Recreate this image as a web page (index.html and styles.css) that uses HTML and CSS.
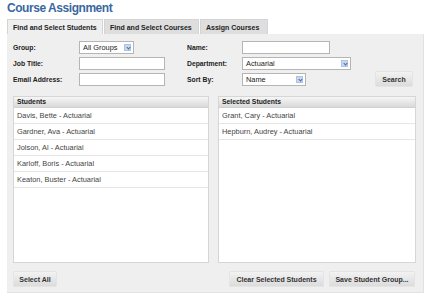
FILE: index.html
```html
<!DOCTYPE html>
<html lang="en">
<head>
  <meta charset="UTF-8">
  <title>Course Assignment</title>
  <link rel="stylesheet" href="styles.css">
</head>
<body>
  <div class="page">
    <h1 class="title">Course Assignment</h1>

    <!-- Tabs -->
    <div class="tabs">
      <div class="tab active">Find and Select Students</div>
      <div class="tab">Find and Select Courses</div>
      <div class="tab">Assign Courses</div>
    </div>

    <div class="panel">
      <!-- Search form -->
      <div class="search-form">
        <label class="lbl">Group:</label>
        <div class="field"><span class="select sel-group">All Groups<i class="arrow"></i></span></div>
        <label class="lbl">Name:</label>
        <div class="field"><span class="input in-name"></span></div>
        <div></div>

        <label class="lbl">Job Title:</label>
        <div class="field"><span class="input in-wide"></span></div>
        <label class="lbl">Department:</label>
        <div class="field"><span class="select sel-dept">Actuarial<i class="arrow"></i></span></div>
        <div></div>

        <label class="lbl">Email Address:</label>
        <div class="field"><span class="input in-wide"></span></div>
        <label class="lbl">Sort By:</label>
        <div class="field"><span class="select sel-sort">Name<i class="arrow"></i></span></div>
        <div class="field right"><button class="btn btn-search">Search</button></div>
      </div>

      <!-- Lists -->
      <div class="lists">
        <div class="listbox">
          <div class="list-head">Students</div>
          <div class="list-row">Davis, Bette - Actuarial</div>
          <div class="list-row">Gardner, Ava - Actuarial</div>
          <div class="list-row">Jolson, Al - Actuarial</div>
          <div class="list-row">Karloff, Boris - Actuarial</div>
          <div class="list-row">Keaton, Buster - Actuarial</div>
        </div>
        <div class="listbox">
          <div class="list-head">Selected Students</div>
          <div class="list-row">Grant, Cary - Actuarial</div>
          <div class="list-row">Hepburn, Audrey - Actuarial</div>
        </div>
      </div>

      <!-- Buttons -->
      <div class="actions">
        <button class="btn btn-all">Select All</button>
        <div class="actions-right">
          <button class="btn btn-clear">Clear Selected Students</button>
          <button class="btn btn-save">Save Student Group...</button>
        </div>
      </div>
    </div>
  </div>
</body>
</html>
```

FILE: styles.css
```css
/* Base */
body {
  margin: 0;
  background: #fff;
  font-family: "Liberation Sans", Arial, sans-serif;
  color: #222;
}
.page { padding: 0 6px 0 7px; }

.title {
  margin: 0;
  height: 19px;
  line-height: 17px;
  font-size: 12px;
  letter-spacing: -0.45px;
  font-weight: bold;
  color: #3a67a2;
}

/* Tabs */
.tabs { display: flex; gap: 1px; height: 15px; }
.tab {
  padding: 0 0 0 5px;
  line-height: 15px;
  font-size: 7px;
  font-weight: bold;
  white-space: nowrap;
  overflow: hidden;
  background: #dedede;
  border: 1px solid #d4d4d4;
  border-bottom: none;
  box-sizing: border-box;
}
.tab.active { background: #efefef; width: 96px; }
.tab:nth-child(2) { width: 95px; }
.tab:nth-child(3) { width: 68px; }

/* Panel */
.panel {
  background: #efefef;
  border-right: 1px solid #e2e2e2;
  border-bottom: 1px solid #e2e2e2;
  padding: 7px 7px 6px 6px;
  height: 259px;
  box-sizing: border-box;
}

/* Search form */
.search-form {
  display: grid;
  grid-template-columns: 66px 108px 55px 1fr auto;
  grid-auto-rows: 13px;
  row-gap: 3px;
  align-items: center;
}
.lbl { font-size: 6.8px; font-weight: bold; color: #222; white-space: nowrap; }
.field { height: 13px; }
.field.right { display: flex; align-items: flex-start; padding-right: 3px; }

.input, .select {
  display: block;
  height: 13px;
  box-sizing: border-box;
  background: #fff;
  border: 1px solid #b5b5b5;
}
.in-name { width: 88px; }
.in-wide { width: 86px; }

.select {
  position: relative;
  padding-left: 3px;
  font-size: 7.4px;
  line-height: 11px;
  color: #222;
}
.sel-group { width: 55px; }
.sel-dept { width: 109px; }
.sel-sort { width: 64px; }
.arrow {
  position: absolute;
  right: 2px;
  top: 2px;
  width: 7px;
  height: 7px;
  background: #c9d8ee;
  border: 1px solid #aec3e2;
  box-sizing: border-box;
}
.arrow::after {
  content: "";
  position: absolute;
  left: 1.5px;
  top: 0.5px;
  width: 2px;
  height: 2px;
  border-right: 1px solid #3f68a8;
  border-bottom: 1px solid #3f68a8;
  transform: rotate(45deg);
}

/* Buttons */
.btn {
  height: 16px;
  padding: 0;
  font-family: inherit;
  font-size: 7px;
  font-weight: bold;
  color: #333;
  background: linear-gradient(#f2f2f2, #dcdcdc);
  border: 1px solid #e4e4e4;
  border-radius: 1px;
}
.btn-search { width: 38px; margin-top: -2px; }
.btn-all { width: 44px; }
.btn-clear { width: 95px; }
.btn-save { width: 86px; }

/* Lists */
.lists {
  display: flex;
  gap: 9px;
  margin-top: 10px;
  height: 167px;
}
.listbox {
  background: #fff;
  border: 1px solid #d6d6d6;
  box-sizing: border-box;
}
.listbox:first-child { width: 196px; }
.listbox:last-child { width: 198px; }
.list-head {
  height: 10px;
  line-height: 10px;
  padding-left: 3px;
  font-size: 6.8px;
  font-weight: bold;
  background: linear-gradient(#f6f6f6, #d9d9d9);
  border-bottom: 1px solid #d0d0d0;
}
.list-row {
  height: 15px;
  line-height: 15px;
  padding-left: 3px;
  font-size: 7.4px;
  color: #444;
  border-bottom: 1px solid #e6e6e6;
}

/* Action bar */
.actions {
  display: flex;
  justify-content: space-between;
  margin-top: 8px;
  padding-right: 1px;
}
.actions-right { display: flex; gap: 5px; }
```
